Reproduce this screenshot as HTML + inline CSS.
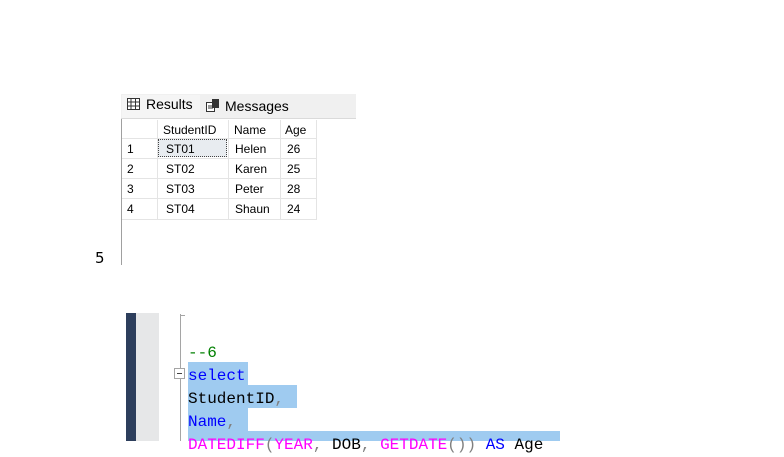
<!DOCTYPE html>
<html><head><style>
body{margin:0;width:784px;height:441px;overflow:hidden;background:#fff;position:relative;font-family:"Liberation Sans",sans-serif}
.a{position:absolute}
.t{font-size:12px;color:#000;line-height:20px}
.code{font-family:"Liberation Mono",monospace;font-size:16px;line-height:23px;white-space:pre}
</style></head><body>
<div class="a" style="left:121px;top:94px;width:235px;height:24px;background:#f0f0f0"></div>
<div class="a" style="left:122px;top:95px;width:78px;height:24px;background:#f5f5f5"></div>
<div class="a" style="left:121px;top:118px;width:235px;height:1px;background:#dadada"></div>
<svg class="a" style="left:127px;top:98px" width="14" height="12"><rect x="0.5" y="0.5" width="12" height="11" fill="#fff" stroke="#333"/><path d="M0 4h13M0 8h13M4 0v12M8.5 0v12" stroke="#333"/></svg>
<div class="a" style="left:146px;top:96px;font-size:14px;color:#000">Results</div>
<svg class="a" style="left:206px;top:99px" width="14" height="14"><rect x="0.5" y="3.5" width="8" height="9" fill="#fff" stroke="#333"/><rect x="6" y="0" width="7" height="9" fill="#333"/><path d="M2 7h5M2 9h5" stroke="#333"/></svg>
<div class="a" style="left:225px;top:98px;font-size:14px;color:#000">Messages</div>
<div class="a" style="left:121px;top:119px;width:1px;height:146px;background:#a0a0a0"></div>
<div class="a" style="left:122px;top:120px;width:194px;height:99px;background:#fff;border-right:1px solid #e4e4e4;border-bottom:1px solid #e4e4e4"></div>
<div class="a" style="left:122px;top:138px;width:194px;height:1px;background:#e4e4e4"></div>
<div class="a" style="left:122px;top:158px;width:194px;height:1px;background:#e4e4e4"></div>
<div class="a" style="left:122px;top:178px;width:194px;height:1px;background:#e4e4e4"></div>
<div class="a" style="left:122px;top:198px;width:194px;height:1px;background:#e4e4e4"></div>
<div class="a" style="left:157px;top:120px;width:1px;height:99px;background:#e4e4e4"></div>
<div class="a" style="left:228px;top:120px;width:1px;height:99px;background:#e4e4e4"></div>
<div class="a" style="left:280px;top:120px;width:1px;height:99px;background:#e4e4e4"></div>
<div class="a" style="left:158px;top:139px;width:69px;height:18px;background:#e8ecf0;border:1px dotted #444;box-sizing:border-box"></div>
<div class="a t" style="left:163px;top:120px">StudentID</div>
<div class="a t" style="left:234px;top:120px">Name</div>
<div class="a t" style="left:285px;top:120px">Age</div>
<div class="a t" style="left:127px;top:139px">1</div><div class="a t" style="left:166px;top:139px">ST01</div><div class="a t" style="left:235px;top:139px">Helen</div><div class="a t" style="left:287px;top:139px">26</div>
<div class="a t" style="left:127px;top:159px">2</div><div class="a t" style="left:166px;top:159px">ST02</div><div class="a t" style="left:235px;top:159px">Karen</div><div class="a t" style="left:287px;top:159px">25</div>
<div class="a t" style="left:127px;top:179px">3</div><div class="a t" style="left:166px;top:179px">ST03</div><div class="a t" style="left:235px;top:179px">Peter</div><div class="a t" style="left:287px;top:179px">28</div>
<div class="a t" style="left:127px;top:199px">4</div><div class="a t" style="left:166px;top:199px">ST04</div><div class="a t" style="left:235px;top:199px">Shaun</div><div class="a t" style="left:287px;top:199px">24</div>
<div class="a" style="left:95px;top:249px;font-size:15px;font-family:'DejaVu Sans',sans-serif">5</div>
<div class="a" style="left:126px;top:313px;width:10px;height:128px;background:#2d3e5c"></div>
<div class="a" style="left:136px;top:313px;width:23px;height:128px;background:#e6e7e8"></div>
<div class="a" style="left:180px;top:314px;width:1px;height:127px;background:#a5a5a5"></div>
<div class="a" style="left:180px;top:315px;width:5px;height:1px;background:#a5a5a5"></div>
<div class="a" style="left:174px;top:368px;width:11px;height:11px;background:#fff;border:1px solid #a5a5a5;box-sizing:border-box"></div>
<div class="a" style="left:177px;top:373px;width:5px;height:1px;background:#444"></div>
<div class="a" style="left:188px;top:362px;width:60px;height:23px;background:#9fcbf0"></div>
<div class="a" style="left:188px;top:385px;width:109px;height:23px;background:#9fcbf0"></div>
<div class="a" style="left:188px;top:408px;width:60px;height:23px;background:#9fcbf0"></div>
<div class="a" style="left:188px;top:431px;width:372px;height:10px;background:#9fcbf0"></div>
<div class="a code" style="left:188px;top:342px"><span style="color:#008000">--6</span>
<span style="color:#0000ff">select</span>
<span style="color:#000">StudentID</span><span style="color:#808080">,</span>
<span style="color:#0000ff">Name</span><span style="color:#808080">,</span>
<span style="color:#ff00ff">DATEDIFF</span><span style="color:#808080">(</span><span style="color:#ff00ff">YEAR</span><span style="color:#808080">,</span> DOB<span style="color:#808080">,</span> <span style="color:#ff00ff">GETDATE</span><span style="color:#808080">())</span> <span style="color:#0000ff">AS</span> Age</div>
</body></html>
